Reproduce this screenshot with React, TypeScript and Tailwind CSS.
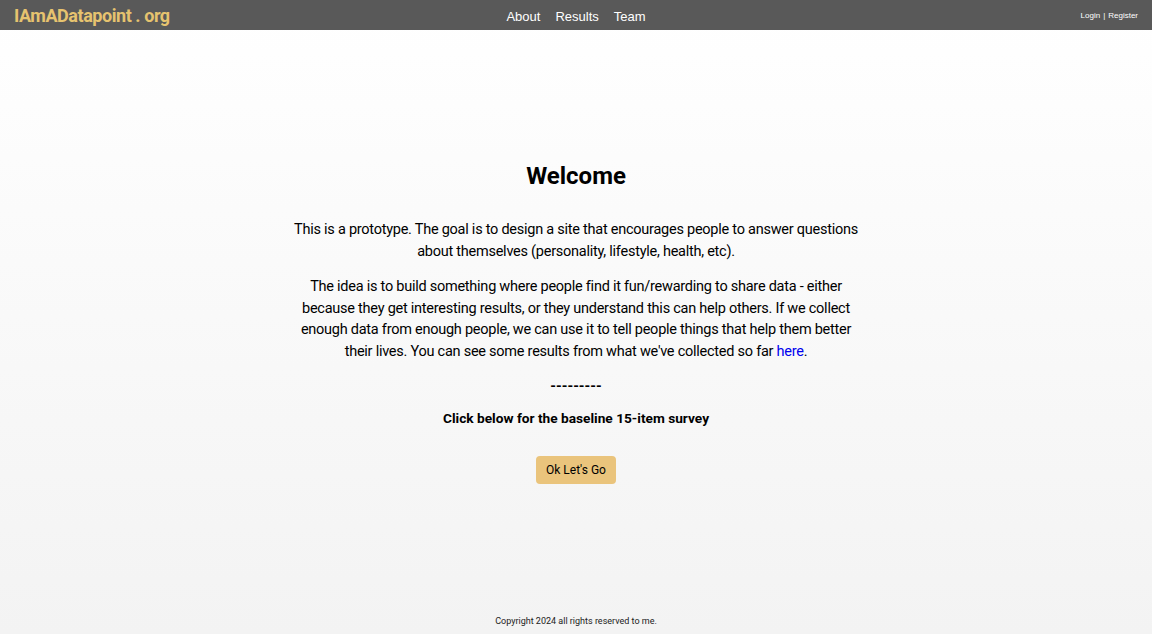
export default function App() {
  const plex = { fontFamily: '"Roboto", "Liberation Sans", sans-serif' };
  return (
    <div
      className="flex min-h-[634px] flex-col bg-gradient-to-b from-white to-[#f3f3f3] text-black"
      style={plex}
    >
      <header className="relative flex h-[30px] items-center bg-[#595959] px-[14px]">
        <a className="text-[18px] font-bold tracking-tight text-[#e6c36f]">IAmADatapoint . org</a>
        <nav
          className="absolute left-1/2 top-[7px] flex -translate-x-1/2 gap-[15px] text-[13px] text-white"
          style={{ fontFamily: '"Liberation Sans", Arial, sans-serif' }}
        >
          <a>About</a>
          <a>Results</a>
          <a>Team</a>
        </nav>
        <div
          className="ml-auto mt-[2px] flex items-center gap-[3px] text-[8px] text-white"
          style={{ fontFamily: '"Liberation Sans", Arial, sans-serif' }}
        >
          <a>Login</a>
          <span>|</span>
          <a>Register</a>
        </div>
      </header>

      <main className="flex flex-1 flex-col items-center pt-[130px] text-center">
        <h1 className="text-[24px] font-bold leading-[32px]">Welcome</h1>
        <div className="mt-[27px] w-[640px] text-[14.5px] leading-[21.6px] tracking-[-0.25px]">
          <p>
            This is a prototype. The goal is to design a site that encourages people to answer questions
            <br />
            about themselves (personality, lifestyle, health, etc).
          </p>
          <p className="mt-[14px]">
            The idea is to build something where people find it fun/rewarding to share data - either
            <br />
            because they get interesting results, or they understand this can help others. If we collect
            <br />
            enough data from enough people, we can use it to tell people things that help them better
            <br />
            their lives. You can see some results from what we've collected so far{" "}
            <a className="text-[#0000ee]">here</a>.
          </p>
          <p className="mt-[13px] font-bold tracking-normal">---------</p>
          <p className="mt-[11px] text-[13.7px] font-bold tracking-normal">
            Click below for the baseline 15-item survey
          </p>
        </div>
        <button className="mt-[26px] h-[28px] rounded-[4px] bg-[#eac47c] px-[10px] text-[12px]">
          Ok Let's Go
        </button>
      </main>

      <footer className="pb-[6px] text-center text-[9px] text-[#222]">Copyright 2024 all rights reserved to me.</footer>
    </div>
  );
}
